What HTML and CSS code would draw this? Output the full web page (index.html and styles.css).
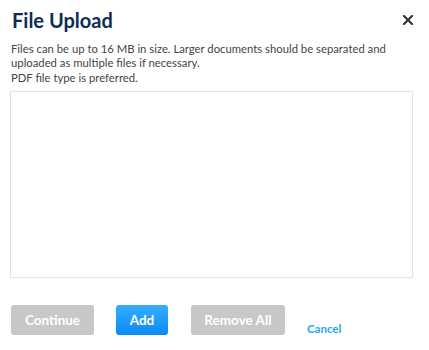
FILE: index.html
```html
<!DOCTYPE html>
<html lang="en">
<head>
  <meta charset="UTF-8">
  <title>File Upload</title>
  <link rel="stylesheet" href="styles.css">
</head>
<body>
  <div class="dialog">
    <div class="dialog-head">
      <h1>File Upload</h1>
      <button class="close-btn" aria-label="Close">
        <svg width="10" height="10" viewBox="0 0 10 10"><path d="M1 1L9 9M9 1L1 9" stroke="#333" stroke-width="2.2" stroke-linecap="square"/></svg>
      </button>
    </div>
    <p class="note">Files can be up to 16 MB in size. Larger documents should be separated and uploaded as multiple files if necessary.</p>
    <p class="note">PDF file type is preferred.</p>
    <div class="drop-area"></div>
    <div class="actions">
      <button class="btn disabled">Continue</button>
      <button class="btn primary">Add</button>
      <button class="btn disabled">Remove All</button>
      <a class="cancel" href="#">Cancel</a>
    </div>
  </div>
</body>
</html>
```

FILE: styles.css
```css
body {
  margin: 0;
  background: #fff;
  font-family: Lato, "Open Sans", Arial, sans-serif;
  color: #444;
}

.dialog {
  padding: 8px 16px 0 10px;
}

.dialog-head {
  display: flex;
  justify-content: space-between;
  align-items: center;
  padding-left: 2px;
  height: 24px;
  margin-bottom: 10px;
}

.dialog-head h1 {
  margin: 0;
  font-size: 20px;
  font-weight: 700;
  color: #0d2d55;
}

.close-btn {
  border: none;
  background: none;
  padding: 0;
  width: 10px;
  height: 10px;
  display: flex;
}

.note {
  margin: 0 0 1px 1px;
  font-size: 11.3px;
  line-height: 14px;
}

.drop-area {
  margin-top: 6px;
  height: 185px;
  border: 1px solid #e3e3e3;
}

.actions {
  display: flex;
  align-items: flex-start;
  margin-top: 27px;
  padding-left: 1px;
}

.btn {
  height: 30px;
  border: none;
  border-radius: 3px;
  color: #fff;
  font-family: inherit;
  font-size: 13.5px;
  font-weight: 700;
  margin-right: 22px;
}

.btn.disabled {
  background: #c8c8c8;
  width: 83px;
}

.btn.disabled:nth-of-type(3) {
  width: 94px;
}

.btn.primary {
  width: 52px;
  background: linear-gradient(#36adff, #0b8af5);
  margin-right: 23px;
}

.cancel {
  margin-top: 17px;
  font-size: 11.5px;
  font-weight: 700;
  color: #22a8f3;
  text-decoration: none;
}
```
